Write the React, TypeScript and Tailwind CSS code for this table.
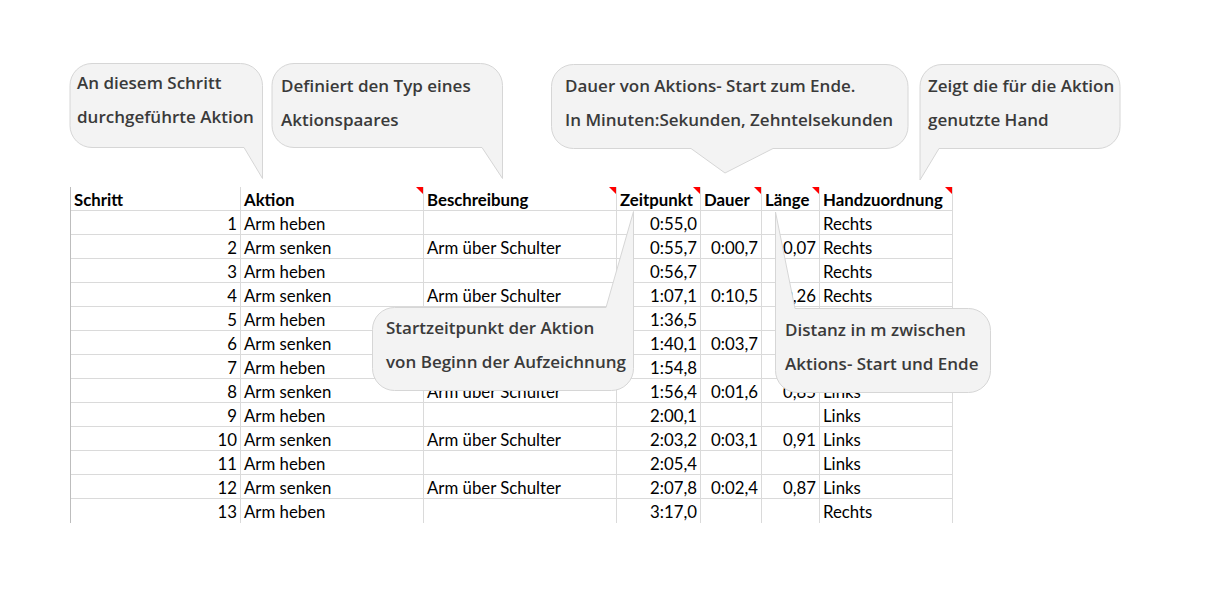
import React from 'react';

type Row = {
  step: number;
  action: string;
  desc?: string;
  time: string;
  dur?: string;
  len?: string;
  hand?: string;
};

// rows 5-7 partly sit under the callouts, those cells are left blank
const rows: Row[] = [
  { step: 1, action: 'Arm heben', time: '0:55,0', hand: 'Rechts' },
  { step: 2, action: 'Arm senken', desc: 'Arm über Schulter', time: '0:55,7', dur: '0:00,7', len: '0,07', hand: 'Rechts' },
  { step: 3, action: 'Arm heben', time: '0:56,7', hand: 'Rechts' },
  { step: 4, action: 'Arm senken', desc: 'Arm über Schulter', time: '1:07,1', dur: '0:10,5', len: '0,26', hand: 'Rechts' },
  { step: 5, action: 'Arm heben', time: '1:36,5' },
  { step: 6, action: 'Arm senken', time: '1:40,1', dur: '0:03,7' },
  { step: 7, action: 'Arm heben', time: '1:54,8' },
  { step: 8, action: 'Arm senken', desc: 'Arm über Schulter', time: '1:56,4', dur: '0:01,6', len: '0,85', hand: 'Links' },
  { step: 9, action: 'Arm heben', time: '2:00,1', hand: 'Links' },
  { step: 10, action: 'Arm senken', desc: 'Arm über Schulter', time: '2:03,2', dur: '0:03,1', len: '0,91', hand: 'Links' },
  { step: 11, action: 'Arm heben', time: '2:05,4', hand: 'Links' },
  { step: 12, action: 'Arm senken', desc: 'Arm über Schulter', time: '2:07,8', dur: '0:02,4', len: '0,87', hand: 'Links' },
  { step: 13, action: 'Arm heben', time: '3:17,0', hand: 'Rechts' },
];

// header labels, and whether the cell carries a comment marker
const headers: { label: string; note: boolean }[] = [
  { label: 'Schritt', note: false },
  { label: 'Aktion', note: true },
  { label: 'Beschreibung', note: true },
  { label: 'Zeitpunkt', note: true },
  { label: 'Dauer', note: true },
  { label: 'Länge', note: true },
  { label: 'Handzuordnung', note: true },
];

function Cell({ children, right, last }: { children?: React.ReactNode; right?: boolean; last?: boolean }) {
  return (
    <div
      className={`h-6 border-r border-[#dadada] px-[3px] leading-[25px] whitespace-nowrap overflow-hidden ${
        right ? 'text-right' : 'text-left'
      } ${last ? '' : 'border-b'}`}
    >
      {children}
    </div>
  );
}

interface CalloutProps {
  box: string; // position + size of the bubble incl. tail
  view: string; // svg viewBox in page coordinates
  w: number;
  h: number;
  d: string;
  textPos: string;
  lines: string[];
}

function Callout({ box, view, w, h, d, textPos, lines }: CalloutProps) {
  return (
    <div className={`absolute ${box}`}>
      <svg className="absolute inset-0" width={w} height={h} viewBox={view}>
        <path d={d} fill="#f3f3f3" stroke="#d6d6d6" strokeWidth={1} strokeLinejoin="round" />
      </svg>
      <div className={`absolute ${textPos} text-[17px] leading-[34px] font-semibold text-[#3a3a3a] whitespace-nowrap`}>
        {lines.map((l) => (
          <div key={l}>{l}</div>
        ))}
      </div>
    </div>
  );
}

export default function App() {
  return (
    <div className="relative w-[1221px] h-[601px] overflow-hidden bg-white">
      {/* spreadsheet */}
      <div
        className="mt-[187px] ml-[70px] w-fit grid grid-cols-[170px_183px_193px_84px_61px_58px_133px] border-l border-[#bdbdbd] text-[16.8px] text-black"
        style={{ fontFamily: 'Lato, "Liberation Sans", sans-serif' }}
      >
        {headers.map((h) => (
          <div
            key={h.label}
            className="relative h-6 border-r border-b border-[#dadada] px-[3px] leading-[25px] font-bold whitespace-nowrap"
          >
            {h.label}
            {h.note && (
              <span className="absolute right-0 top-0 w-0 h-0 border-t-[7px] border-t-[#ff0000] border-l-[7px] border-l-transparent" />
            )}
          </div>
        ))}
        {rows.map((r, i) => {
          const last = i === rows.length - 1;
          return (
            <React.Fragment key={r.step}>
              <Cell right last={last}>{r.step}</Cell>
              <Cell last={last}>{r.action}</Cell>
              <Cell last={last}>{r.desc}</Cell>
              <Cell right last={last}>{r.time}</Cell>
              <Cell right last={last}>{r.dur}</Cell>
              <Cell right last={last}>{r.len}</Cell>
              <Cell last={last}>{r.hand}</Cell>
            </React.Fragment>
          );
        })}
      </div>

      {/* callouts */}
      <div style={{ fontFamily: '"Open Sans", "Noto Sans", sans-serif' }}>
        <Callout
          box="left-[69px] top-[62px] w-[195px] h-[118px]"
          view="69 62 195 118"
          w={195}
          h={118}
          d="M92 63.5 H240.5 A22 22 0 0 1 262.5 85.5 V178.5 L244 147.5 H92 A22 22 0 0 1 70 125.5 V85.5 A22 22 0 0 1 92 63.5 Z"
          textPos="left-[8px] top-[4px]"
          lines={['An diesem Schritt', 'durchgeführte Aktion']}
        />
        <Callout
          box="left-[271px] top-[62px] w-[233px] h-[118px]"
          view="271 62 233 118"
          w={233}
          h={118}
          d="M294 63.5 H480.5 A22 22 0 0 1 502.5 85.5 V178.5 L482 147.5 H294 A22 22 0 0 1 272 125.5 V85.5 A22 22 0 0 1 294 63.5 Z"
          textPos="left-[10px] top-[7px]"
          lines={['Definiert den Typ eines', 'Aktionspaares']}
        />
        <Callout
          box="left-[550px] top-[63px] w-[360px] h-[112px]"
          view="550 63 360 112"
          w={360}
          h={112}
          d="M573.5 64.5 H886 A22 22 0 0 1 908 86.5 V126.5 A22 22 0 0 1 886 148.5 H773 L725 173 L691 148.5 H573.5 A22 22 0 0 1 551.5 126.5 V86.5 A22 22 0 0 1 573.5 64.5 Z"
          textPos="left-[15px] top-[6px]"
          lines={['Dauer von Aktions- Start zum Ende.', 'In Minuten:Sekunden, Zehntelsekunden']}
        />
        <Callout
          box="left-[918px] top-[63px] w-[204px] h-[119px]"
          view="918 63 204 119"
          w={204}
          h={119}
          d="M942 64.5 H1098 A22 22 0 0 1 1120 86.5 V126.5 A22 22 0 0 1 1098 148.5 H939 L920 180 V86.5 A22 22 0 0 1 942 64.5 Z"
          textPos="left-[10px] top-[6px]"
          lines={['Zeigt die für die Aktion', 'genutzte Hand']}
        />
        <Callout
          box="left-[371px] top-[210px] w-[264px] h-[182px]"
          view="371 210 264 182"
          w={264}
          h={182}
          d="M394.5 307.5 H606 L633.5 211.5 V368.5 A22 22 0 0 1 611.5 390.5 H394.5 A22 22 0 0 1 372.5 368.5 V329.5 A22 22 0 0 1 394.5 307.5 Z"
          textPos="left-[15px] top-[101px]"
          lines={['Startzeitpunkt der Aktion', 'von Beginn der Aufzeichnung']}
        />
        <Callout
          box="left-[774px] top-[210px] w-[218px] h-[184px]"
          view="774 210 218 184"
          w={218}
          h={184}
          d="M775.5 212 L795 308.5 H968.5 A22 22 0 0 1 990.5 330.5 V370.5 A22 22 0 0 1 968.5 392.5 H797.5 A22 22 0 0 1 775.5 370.5 Z"
          textPos="left-[11px] top-[103px]"
          lines={['Distanz in m zwischen', 'Aktions- Start und Ende']}
        />
      </div>
    </div>
  );
}
